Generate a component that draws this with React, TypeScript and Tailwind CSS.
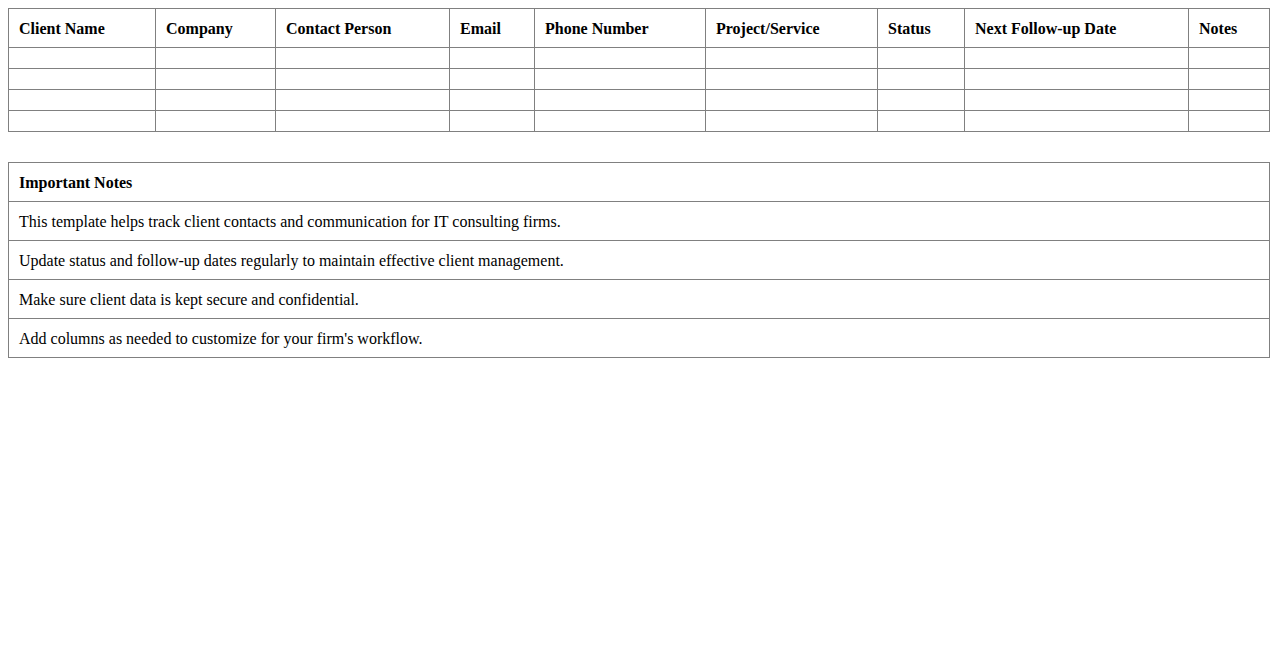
import React from "react";

const columns = [
  { label: "Client Name", w: "w-[147px]" },
  { label: "Company", w: "w-[120px]" },
  { label: "Contact Person", w: "w-[174px]" },
  { label: "Email", w: "w-[85px]" },
  { label: "Phone Number", w: "w-[171px]" },
  { label: "Project/Service", w: "w-[172px]" },
  { label: "Status", w: "w-[87px]" },
  { label: "Next Follow-up Date", w: "w-[224px]" },
  { label: "Notes", w: "w-[81px]" },
];

const notes = [
  "This template helps track client contacts and communication for IT consulting firms.",
  "Update status and follow-up dates regularly to maintain effective client management.",
  "Make sure client data is kept secure and confidential.",
  "Add columns as needed to customize for your firm's workflow.",
];

const App = () => {
  return (
    <div className="p-2 bg-white text-black text-base font-['Liberation_Serif',serif] min-h-screen">
      <table className="w-full table-fixed border-collapse">
        <colgroup>
          {columns.map((c) => (
            <col key={c.label} className={c.w} />
          ))}
        </colgroup>
        <thead>
          <tr>
            {columns.map((c) => (
              <th
                key={c.label}
                className="border border-[#808080] px-[10px] pt-[11px] pb-[9px] text-left font-bold leading-[18px]"
              >
                {c.label}
              </th>
            ))}
          </tr>
        </thead>
        <tbody>
          {[0, 1, 2, 3].map((r) => (
            <tr key={r}>
              {columns.map((c) => (
                <td key={c.label} className="border border-[#808080] p-[10px] h-[21px]"></td>
              ))}
            </tr>
          ))}
        </tbody>
      </table>

      <table className="w-full border-collapse mt-[30px]">
        <tbody>
          <tr>
            <th className="border border-[#808080] px-[10px] pt-[11px] pb-[9px] text-left font-bold leading-[18px]">
              Important Notes
            </th>
          </tr>
          {notes.map((n) => (
            <tr key={n}>
              <td className="border border-[#808080] px-[10px] pt-[11px] pb-[9px] leading-[18px]">{n}</td>
            </tr>
          ))}
        </tbody>
      </table>
    </div>
  );
};

export default App;
